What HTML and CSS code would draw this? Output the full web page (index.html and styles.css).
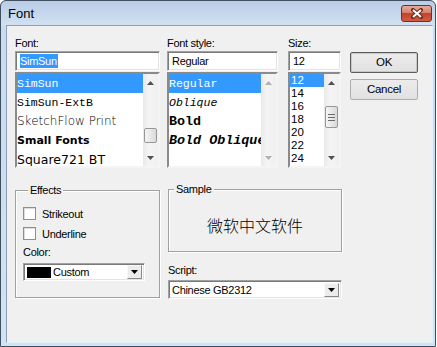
FILE: index.html
```html
<!DOCTYPE html>
<html lang="en">
<head>
  <meta charset="UTF-8">
  <title>Font</title>
  <link rel="stylesheet" href="styles.css">
</head>
<body>
<div class="window">
  <div class="titlebar">
    <span class="title">Font</span>
    <div class="close">
      <svg width="14" height="11" viewBox="0 0 14 11">
        <path d="M3 2 L11 9 M11 2 L3 9" stroke="#6b2a1c" stroke-width="4" stroke-linecap="round"/>
        <path d="M3 2 L11 9 M11 2 L3 9" stroke="#fff" stroke-width="2"/>
      </svg>
    </div>
  </div>

  <div class="client">
    <div class="top-row">
      <div class="column col-font">
        <label class="caption">Font:</label>
        <div class="edit"><span class="selection">SimSun</span></div>
        <div class="listbox">
          <ul class="items">
            <li class="selected f-simsun">SimSun</li>
            <li class="f-simsun">SimSun-ExtB</li>
            <li class="f-sketch">SketchFlow Print</li>
            <li class="f-small">Small Fonts</li>
            <li class="f-square">Square721 BT</li>
          </ul>
          <div class="vscroll">
            <div class="sb-btn"><svg width="7" height="4"><path d="M0 4 L3.5 0 L7 4Z"/></svg></div>
            <div class="sb-track"><div class="thumb thumb-font"></div></div>
            <div class="sb-btn"><svg width="7" height="4"><path d="M0 0 L3.5 4 L7 0Z"/></svg></div>
          </div>
        </div>
      </div>

      <div class="column col-style">
        <label class="caption">Font style:</label>
        <div class="edit">Regular</div>
        <div class="listbox">
          <ul class="items">
            <li class="selected f-simsun">Regular</li>
            <li class="f-simsun f-italic">Oblique</li>
            <li class="f-simsun f-bold">Bold</li>
            <li class="f-simsun f-bold f-italic">Bold Oblique</li>
          </ul>
          <div class="vscroll disabled">
            <div class="sb-btn"><svg width="7" height="4"><path d="M0 4 L3.5 0 L7 4Z"/></svg></div>
            <div class="sb-track"></div>
            <div class="sb-btn"><svg width="7" height="4"><path d="M0 0 L3.5 4 L7 0Z"/></svg></div>
          </div>
        </div>
      </div>

      <div class="column col-size">
        <label class="caption">Size:</label>
        <div class="edit">12</div>
        <div class="listbox">
          <ul class="items sizes">
            <li class="selected">12</li>
            <li>14</li>
            <li>16</li>
            <li>18</li>
            <li>20</li>
            <li>22</li>
            <li>24</li>
          </ul>
          <div class="vscroll">
            <div class="sb-btn"><svg width="7" height="4"><path d="M0 4 L3.5 0 L7 4Z"/></svg></div>
            <div class="sb-track">
              <div class="thumb thumb-size">
                <span class="grip"></span><span class="grip"></span><span class="grip"></span>
              </div>
            </div>
            <div class="sb-btn"><svg width="7" height="4"><path d="M0 0 L3.5 4 L7 0Z"/></svg></div>
          </div>
        </div>
      </div>

      <div class="buttons">
        <div class="button default">OK</div>
        <div class="button">Cancel</div>
      </div>
    </div>

    <div class="bottom-row">
      <div class="group effects">
        <span class="group-title">Effects</span>
        <div class="check-row">
          <span class="checkbox"></span>
          <span>Strikeout</span>
        </div>
        <div class="check-row second">
          <span class="checkbox"></span>
          <span>Underline</span>
        </div>
        <label class="caption color-caption">Color:</label>
        <div class="combo color-combo">
          <span class="swatch"></span>
          <span class="combo-text">Custom</span>
          <span class="drop-btn"><svg width="7" height="4"><path d="M0 0 L3.5 4 L7 0Z"/></svg></span>
        </div>
      </div>

      <div class="right-col">
        <div class="group sample">
          <span class="group-title">Sample</span>
          <div class="sample-text">微软中文软件</div>
        </div>
        <label class="caption script-caption">Script:</label>
        <div class="combo script-combo">
          <span class="combo-text">Chinese GB2312</span>
          <span class="drop-btn"><svg width="7" height="4"><path d="M0 0 L3.5 4 L7 0Z"/></svg></span>
        </div>
      </div>
    </div>
  </div>
</div>
</body>
</html>
```

FILE: styles.css
```css
body {
  margin: 0;
  background: #fff;
  font-family: "Liberation Sans", Arial, sans-serif;
  font-size: 11px;
  letter-spacing: -0.3px;
  color: #000;
}

.window {
  width: 436px;
  height: 347px;
  box-sizing: border-box;
  border: 1px solid #3f4e60;
  border-radius: 6px 6px 0 0;
  background: linear-gradient(#bacde6, #d2e1f2 24px, #c8dbef 25px, #cfe4f4);
  display: flex;
  flex-direction: column;
}

/* title bar */
.titlebar {
  height: 24px;
  display: flex;
  padding-left: 7px;
}

.title {
  font-size: 13px;
  letter-spacing: 0;
  line-height: 26px;
  flex: 1;
}

.close {
  width: 29px;
  height: 15px;
  margin: 4px 3px 0 0;
  border: 1px solid #6e3026;
  border-radius: 3px;
  background: linear-gradient(#e9a999, #d7826f 45%, #c2432c 50%, #d35c43);
  display: flex;
  align-items: center;
  justify-content: center;
}

/* client area */
.client {
  flex: 1;
  margin: 0 2px 3px 5px;
  border: 1px solid;
  border-color: #8b9fb8 #e2f1fa #e2f1fa #8b9fb8;
  background: #f0f0f0;
  padding: 10px 0 0 8px;
}

.top-row {
  display: flex;
  align-items: flex-start;
}

.column {
  display: flex;
  flex-direction: column;
}

.col-font { width: 145px; }
.col-style { width: 111px; margin-left: 7px; }
.col-size { width: 53px; margin-left: 10px; }

.caption {
  display: block;
  height: 14px;
  line-height: 14px;
}

.edit {
  height: 20px;
  margin-top: 1px;
  box-sizing: border-box;
  border: 1px solid;
  border-color: #a0a0a0 #fff #fff #a0a0a0;
  box-shadow: inset 1px 1px #7a7a7a, inset -1px -1px #e3e3e3;
  background: #fff;
  line-height: 18px;
  padding-left: 4px;
}

.selection {
  background: #3399ff;
  color: #fff;
  padding: 1px 1px 1px 0;
}

.listbox {
  height: 96px;
  margin-top: 1px;
  box-sizing: border-box;
  border: 2px solid;
  border-color: #8a8a8a #f4f4f4 #f4f4f4 #8a8a8a;
  background: #fff;
  display: flex;
  overflow: hidden;
}

.items {
  flex: 1;
  margin: 0;
  padding: 0;
  list-style: none;
  overflow: hidden;
  min-width: 0;
}

.items li {
  height: 19px;
  line-height: 19px;
  white-space: nowrap;
  overflow: hidden;
  letter-spacing: 0;
}

.items li.selected {
  background: #3399ff;
  color: #fff;
}

.f-simsun {
  font-family: "Liberation Mono", monospace;
  font-size: 11.5px;
}

.f-italic { font-style: italic; }

.f-bold {
  font-weight: bold;
  font-size: 13.4px;
}

.f-sketch {
  font-family: "DejaVu Sans", sans-serif;
  font-weight: 200;
  font-size: 12px;
}

.f-small {
  font-family: "DejaVu Sans", sans-serif;
  font-weight: bold;
  font-size: 11px;
}

.f-square {
  font-family: "DejaVu Sans", sans-serif;
  font-size: 12.5px;
}

.sizes li {
  height: 13px;
  line-height: 13px;
  padding-left: 1px;
  font-size: 11.5px;
}

/* scroll bar */
.vscroll {
  width: 15px;
  display: flex;
  flex-direction: column;
  background: linear-gradient(90deg, #e9e9e9, #f4f4f4 40%, #f0f0f0);
}

.sb-btn {
  height: 17px;
  display: flex;
  align-items: center;
  justify-content: center;
}

.sb-btn svg { fill: #505050; }
.disabled .sb-btn svg { fill: #b0b0b0; }

.sb-track {
  flex: 1;
}

.thumb {
  margin: 0 1px;
  box-sizing: border-box;
  border: 1px solid #979797;
  border-radius: 2px;
  background: linear-gradient(90deg, #f4f4f4, #e8e8e8 50%, #d9d9d9);
  display: flex;
  flex-direction: column;
  align-items: center;
  justify-content: center;
  gap: 2px;
}

.thumb-font {
  height: 15px;
  margin-top: 37px;
}

.thumb-size {
  height: 22px;
  margin-top: 15px;
}

.grip {
  width: 7px;
  height: 1px;
  background: #6a6a6a;
}

/* buttons */
.buttons {
  width: 68px;
  margin: 16px 0 0 9px;
  display: flex;
  flex-direction: column;
  gap: 6px;
}

.button {
  height: 21px;
  box-sizing: border-box;
  border: 1px solid #adadad;
  border-radius: 2px;
  background: linear-gradient(#ececec, #e1e1e1);
  text-align: center;
  line-height: 19px;
  font-size: 11.5px;
}

.button.default {
  border-color: #5c5c5c;
  box-shadow: inset 0 0 0 1px #c8c8c8;
}

/* bottom part */
.bottom-row {
  display: flex;
  align-items: flex-start;
  margin-top: 21px;
}

.group {
  box-sizing: border-box;
  border: 1px solid #a0a0a0;
  box-shadow: inset 1px 1px #fff, 1px 1px #fff;
  display: flex;
  flex-direction: column;
}

.group-title {
  align-self: flex-start;
  margin: -8px 0 0 5px;
  padding: 0 2px;
  background: #f0f0f0;
  line-height: 14px;
}

.effects {
  width: 145px;
  height: 108px;
  margin-top: 1px;
  padding-left: 7px;
}

.check-row {
  display: flex;
  align-items: center;
  height: 13px;
  margin-top: 10px;
  gap: 6px;
}

.check-row.second { margin-top: 7px; }

.checkbox {
  width: 13px;
  height: 13px;
  box-sizing: border-box;
  border: 1px solid #8e8f8f;
  background: #fff;
  box-shadow: inset 1px 1px #dcdcdc;
}

.color-caption { margin-top: 5px; }

.combo {
  box-sizing: border-box;
  border: 1px solid;
  border-color: #a0a0a0 #fff #fff #a0a0a0;
  box-shadow: inset 1px 1px #7a7a7a, inset -1px -1px #e3e3e3;
  background: #fff;
  display: flex;
  align-items: center;
  padding: 0 2px 0 3px;
}

.color-combo {
  width: 122px;
  height: 18px;
  margin-top: 4px;
}

.swatch {
  width: 24px;
  height: 11px;
  background: #000;
  margin-right: 2px;
}

.combo-text {
  flex: 1;
}

.drop-btn {
  width: 15px;
  height: 14px;
  box-sizing: border-box;
  border: 1px solid;
  border-color: #f8f8f8 #8a8a8a #8a8a8a #f8f8f8;
  background: #ececec;
  display: flex;
  align-items: center;
  justify-content: center;
}

.drop-btn svg { fill: #000; }

.right-col {
  width: 174px;
  margin-left: 8px;
  display: flex;
  flex-direction: column;
}

.sample {
  height: 63px;
}

.sample-text {
  flex: 1;
  display: flex;
  align-items: center;
  justify-content: center;
  padding-top: 2px;
  font-family: "Noto Sans CJK SC", sans-serif;
  font-weight: 300;
  font-size: 16px;
  letter-spacing: 0;
}

.script-caption { margin-top: 11px; }

.script-combo {
  height: 19px;
  margin-top: 3px;
}
```
